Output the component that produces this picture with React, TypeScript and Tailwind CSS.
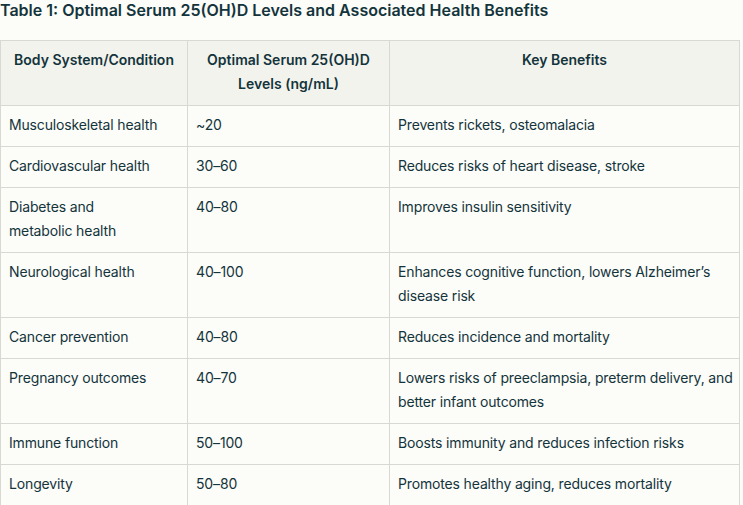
import React from "react";

const rows: { a: string[]; b: string; c: string[] }[] = [
  { a: ["Musculoskeletal health"], b: "~20", c: ["Prevents rickets, osteomalacia"] },
  { a: ["Cardiovascular health"], b: "30–60", c: ["Reduces risks of heart disease, stroke"] },
  { a: ["Diabetes and", "metabolic health"], b: "40–80", c: ["Improves insulin sensitivity"] },
  { a: ["Neurological health"], b: "40–100", c: ["Enhances cognitive function, lowers Alzheimer’s", "disease risk"] },
  { a: ["Cancer prevention"], b: "40–80", c: ["Reduces incidence and mortality"] },
  { a: ["Pregnancy outcomes"], b: "40–70", c: ["Lowers risks of preeclampsia, preterm delivery, and", "better infant outcomes"] },
  { a: ["Immune function"], b: "50–100", c: ["Boosts immunity and reduces infection risks"] },
  { a: ["Longevity"], b: "50–80", c: ["Promotes healthy aging, reduces mortality"] },
];

function Lines({ lines }: { lines: string[] }) {
  return (
    <>
      {lines.map((l, i) => (
        <div key={i} className="whitespace-nowrap">
          {l}
        </div>
      ))}
    </>
  );
}

export default function App() {
  return (
    <div
      className="w-[743px] h-[505px] overflow-hidden bg-[#fcfcf9] text-[#13343b]"
      style={{ fontFamily: "Inter, 'Liberation Sans', sans-serif" }}
    >
      <div className="text-[16px] leading-5 font-semibold">
        Table 1: Optimal Serum 25(OH)D Levels and Associated Health Benefits
      </div>
      <table className="mt-5 w-[739px] table-fixed border-collapse text-[14px] leading-6">
        <colgroup>
          <col className="w-[187px]" />
          <col className="w-[202px]" />
          <col className="w-[350px]" />
        </colgroup>
        <thead>
          <tr className="bg-[#f3f3ee]">
            <th className="border border-[#d9d9d3] px-2 pt-[7px] pb-[9px] align-top text-center font-semibold">
              Body System/Condition
            </th>
            <th className="border border-[#d9d9d3] px-2 pt-[7px] pb-[9px] align-top text-center font-semibold">
              <div>Optimal Serum 25(OH)D</div>
              <div>Levels (ng/mL)</div>
            </th>
            <th className="border border-[#d9d9d3] px-2 pt-[7px] pb-[9px] align-top text-center font-semibold">
              Key Benefits
            </th>
          </tr>
        </thead>
        <tbody className="tracking-[-0.15px]">
          {rows.map((r, i) => (
            <tr key={i}>
              <td className="border border-[#d9d9d3] px-2 pt-[7px] pb-[9px] align-top">
                <Lines lines={r.a} />
              </td>
              <td className="border border-[#d9d9d3] px-2 pt-[7px] pb-[9px] align-top">{r.b}</td>
              <td className="border border-[#d9d9d3] px-2 pt-[7px] pb-[9px] align-top">
                <Lines lines={r.c} />
              </td>
            </tr>
          ))}
        </tbody>
      </table>
    </div>
  );
}
